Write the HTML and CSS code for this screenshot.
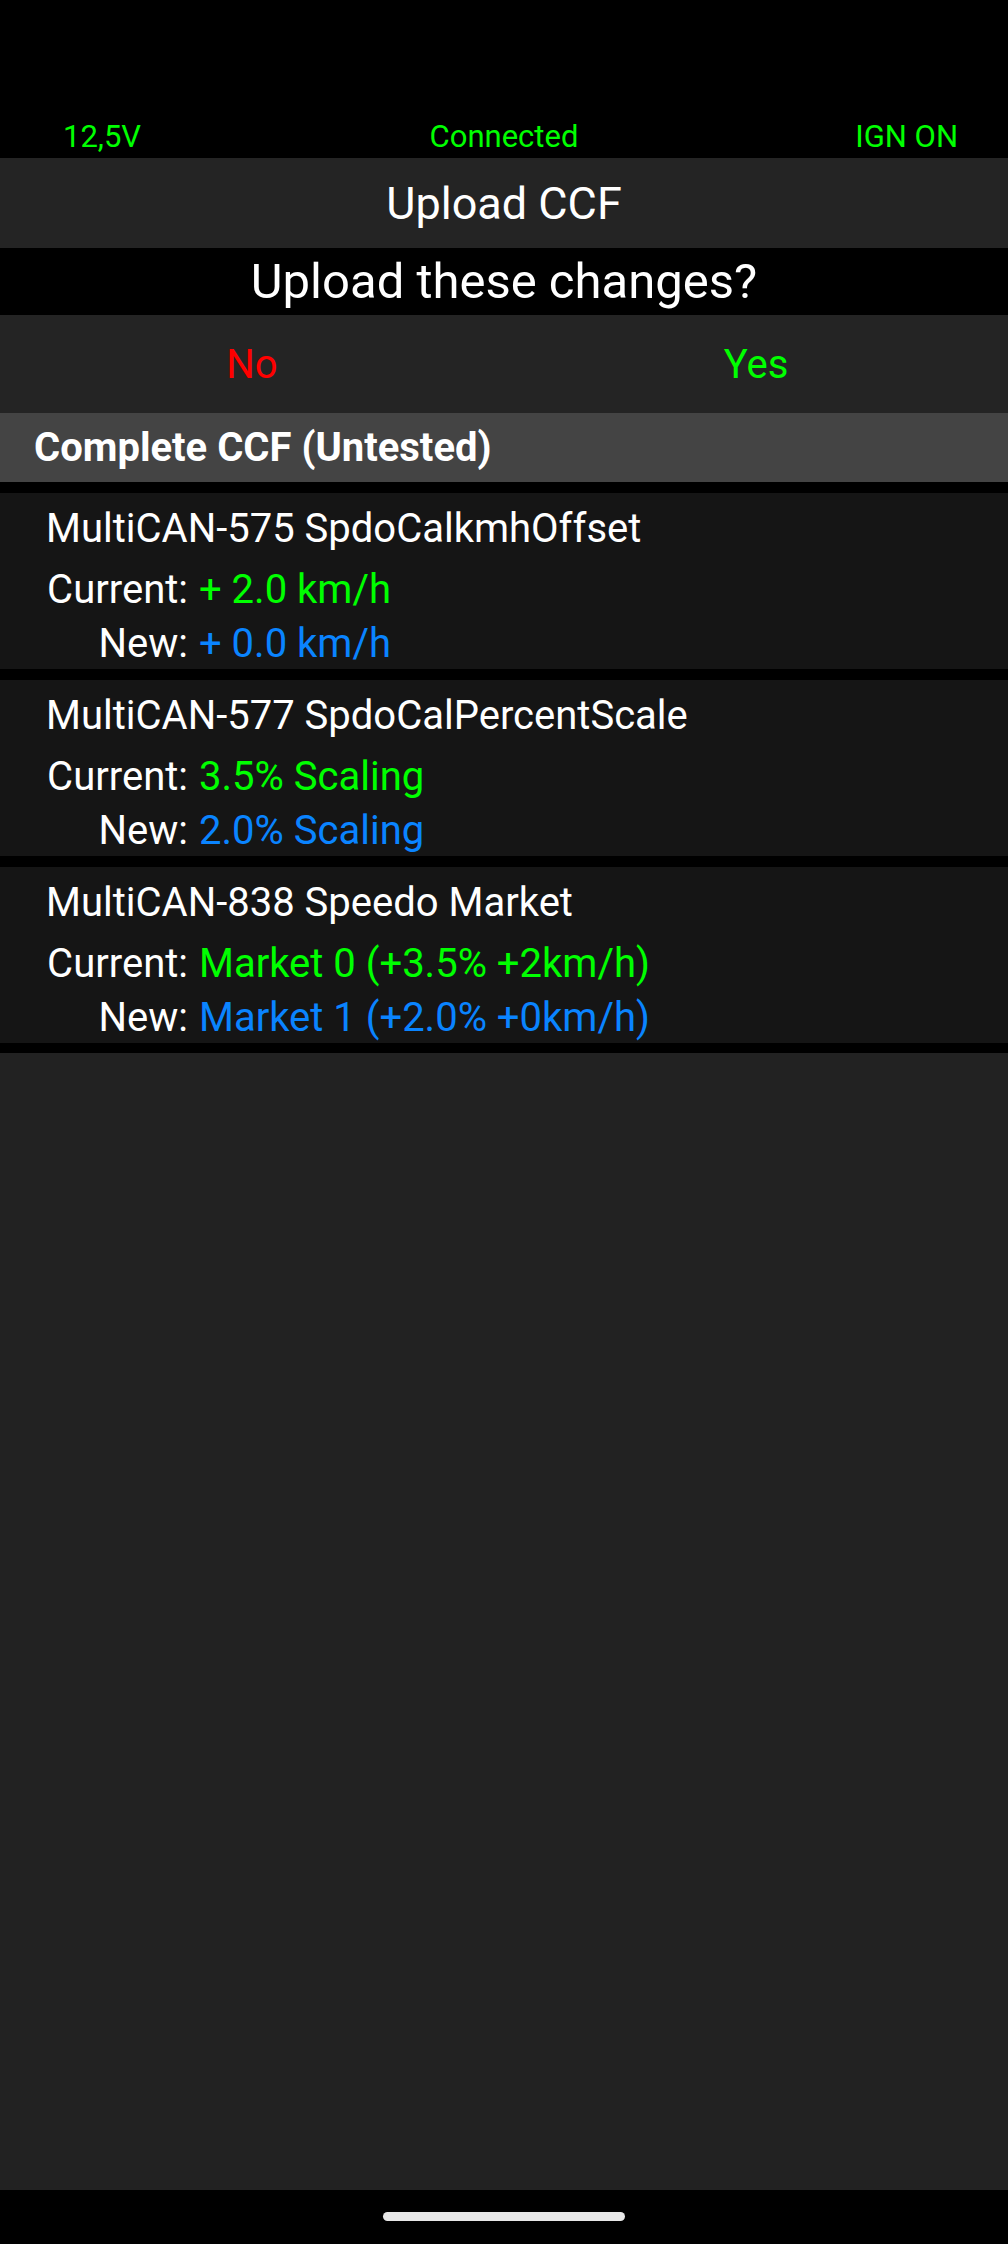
FILE: index.html
```html
<html>
    <head>
        <title>Upload CCF</title>
        <link rel="stylesheet" href="styles.css">
    </head>
    <body>
        <div class="status-bar">
            <span class="status-left">12,5V</span>
            <span class="status-mid">Connected</span>
            <span class="status-right">IGN ON</span>
        </div>
        <div class="title-bar">Upload CCF</div>
        <div class="question">Upload these changes?</div>
        <div class="choices">
            <button class="choice no">No</button>
            <button class="choice yes">Yes</button>
        </div>
        <div class="section-head">Complete CCF (Untested)</div>
        <div class="change-list">
            <div class="change">
                <div class="change-name">MultiCAN-575 SpdoCalkmhOffset</div>
                <div class="change-rows">
                    <span class="label">Current:</span><span class="current">+ 2.0 km/h</span>
                    <span class="label">New:</span><span class="new">+ 0.0 km/h</span>
                </div>
            </div>
            <div class="change">
                <div class="change-name">MultiCAN-577 SpdoCalPercentScale</div>
                <div class="change-rows">
                    <span class="label">Current:</span><span class="current">3.5% Scaling</span>
                    <span class="label">New:</span><span class="new">2.0% Scaling</span>
                </div>
            </div>
            <div class="change">
                <div class="change-name">MultiCAN-838 Speedo Market</div>
                <div class="change-rows">
                    <span class="label">Current:</span><span class="current">Market 0 (+3.5% +2km/h)</span>
                    <span class="label">New:</span><span class="new">Market 1 (+2.0% +0km/h)</span>
                </div>
            </div>
        </div>
        <div class="filler"></div>
        <div class="nav-bar">
            <div class="nav-handle"></div>
        </div>
    </body>
</html>
```

FILE: styles.css
```css
body {
    margin: 0;
    height: 2244px;
    background-color: #222222;
    font-family: Roboto, "Liberation Sans", sans-serif;
    color: #ffffff;
    display: flex;
    flex-direction: column;
}

.status-bar {
    height: 158px;
    box-sizing: border-box;
    padding: 0 50px 3px 50px;
    background-color: #000;
    color: #00ff00;
    font-size: 31px;
    line-height: 36px;
    display: grid;
    grid-template-columns: 1fr auto 1fr;
    align-items: end;
}

.status-left {
    justify-self: start;
    padding-left: 13px;
}

.status-right {
    justify-self: end;
}

.title-bar {
    height: 90px;
    background-color: #242424;
    font-size: 45px;
    display: flex;
    align-items: center;
    justify-content: center;
}

.question {
    height: 67px;
    background-color: #000;
    font-size: 49px;
    display: flex;
    align-items: center;
    justify-content: center;
}

.choices {
    height: 98px;
    background-color: #242424;
    display: flex;
}

.choice {
    flex: 1;
    border: none;
    background: none;
    font-family: inherit;
    font-size: 40px;
    cursor: pointer;
}

.no {
    color: #ff0000;
}

.yes {
    color: #00ff00;
}

.section-head {
    height: 69px;
    box-sizing: border-box;
    padding-left: 34px;
    background-color: #444444;
    font-size: 40px;
    font-weight: bold;
    display: flex;
    align-items: center;
}

.change-list {
    background-color: #000;
    padding: 11px 0 10px 0;
    display: flex;
    flex-direction: column;
    gap: 11px;
}

.change {
    height: 176px;
    box-sizing: border-box;
    padding: 11px 0 0 46px;
    background-color: #151515;
}

.change-name {
    font-size: 40px;
    line-height: 50px;
    margin-bottom: 11px;
}

.change-rows {
    display: grid;
    grid-template-columns: 142px auto;
    justify-content: start;
    column-gap: 11px;
    row-gap: 4px;
    font-size: 40px;
    line-height: 50px;
}

.label {
    justify-self: end;
}

.current {
    color: #00ff00;
}

.new {
    color: #0a84ff;
}

.filler {
    flex: 1;
}

.nav-bar {
    height: 54px;
    background-color: #000;
    display: flex;
    justify-content: center;
    padding-top: 22px;
    box-sizing: border-box;
}

.nav-handle {
    width: 242px;
    height: 9px;
    border-radius: 5px;
    background-color: #e8e8e8;
}
```
